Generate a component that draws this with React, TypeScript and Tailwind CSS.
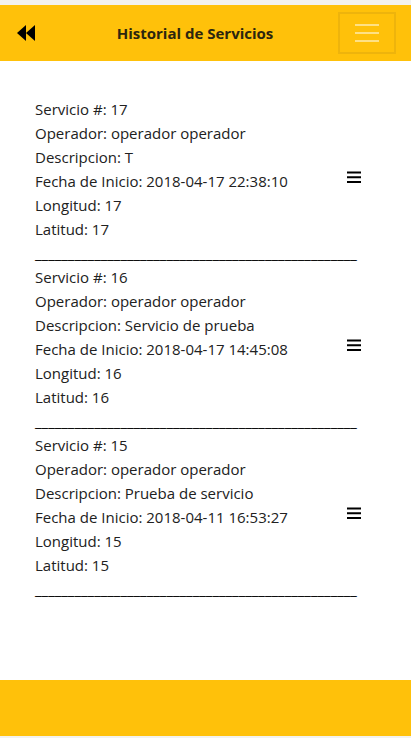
interface Service {
  id: number;
  operator: string;
  description: string;
  start: string;
  longitude: number;
  latitude: number;
}

const services: Service[] = [
  { id: 17, operator: "operador operador", description: "T", start: "2018-04-17 22:38:10", longitude: 17, latitude: 17 },
  { id: 16, operator: "operador operador", description: "Servicio de prueba", start: "2018-04-17 14:45:08", longitude: 16, latitude: 16 },
  { id: 15, operator: "operador operador", description: "Prueba de servicio", start: "2018-04-11 16:53:27", longitude: 15, latitude: 15 },
];

const rule = "_".repeat(49);

function Header() {
  return (
    <header className="flex h-14 items-center justify-between bg-[#ffc10a] pr-[15px] pl-4">
      <button type="button" aria-label="Volver" className="w-9">
        <svg width="20" height="18" viewBox="0 0 20 18" fill="#000" aria-hidden="true">
          <path d="M1 9 L10 1 V17 Z M10 9 L19 1 V17 Z" />
        </svg>
      </button>
      <h1 className="text-[15px] leading-6 font-bold text-[#2c260f]">Historial de Servicios</h1>
      <button
        type="button"
        aria-label="Menú"
        className="flex h-[42px] w-[58px] items-center justify-center border-2 border-[#eeb40c]"
      >
        <svg width="30" height="30" viewBox="0 0 30 30" stroke="#ffe184" strokeWidth="2" aria-hidden="true">
          <path d="M3 7h24M3 15h24M3 23h24" />
        </svg>
      </button>
    </header>
  );
}

function ServiceItem({ service }: { service: Service }) {
  return (
    <li>
      <div className="flex items-center justify-between">
        <div>
          <p>Servicio #: {service.id}</p>
          <p>Operador: {service.operator}</p>
          <p>Descripcion: {service.description}</p>
          <p>Fecha de Inicio: {service.start}</p>
          <p>Longitud: {service.longitude}</p>
          <p>Latitud: {service.latitude}</p>
        </div>
        <button type="button" aria-label={`Opciones del servicio ${service.id}`} className="mt-4">
          <svg width="14" height="12" viewBox="0 0 14 12" fill="#000" aria-hidden="true">
            <path d="M0 .5h14v2H0zM0 5.2h14v2.1H0zM0 10h14v2H0z" />
          </svg>
        </button>
      </div>
      <p aria-hidden="true" className="text-black">{rule}</p>
    </li>
  );
}

export default function App() {
  return (
    <div className="flex min-h-screen flex-col border-t-[5px] border-b-2 border-[#f3f2ee] bg-white font-['Open_Sans','Noto_Sans',sans-serif] text-[15px] leading-6 text-[#212121]">
      <Header />
      <main className="flex-1 px-[35px] pt-9">
        <ul className="max-w-[326px]">
          {services.map((service) => (
            <ServiceItem key={service.id} service={service} />
          ))}
        </ul>
      </main>
      <footer className="h-14 bg-[#ffc10a]" />
    </div>
  );
}
